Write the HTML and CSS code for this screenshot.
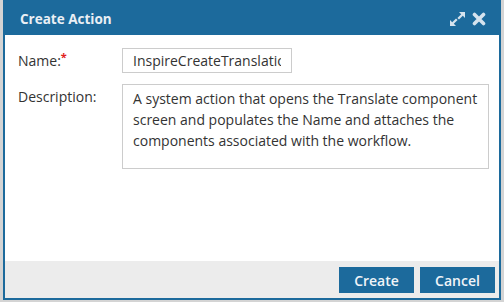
FILE: index.html
```html
<!DOCTYPE html>
<html lang="en">
<head>
    <meta charset="UTF-8">
    <title>Create Action</title>
    <link rel="stylesheet" href="styles.css">
</head>
<body>
    <div class="dialog">
        <div class="dialog-header">
            <span class="dialog-title">Create Action</span>
            <div class="dialog-tools">
                <!-- expand -->
                <svg class="tool-icon" width="17" height="16" viewBox="0 0 17 16">
                    <path d="M10 1 H16 V7 L13.8 4.8 L10 8.6 L8.4 7 L12.2 3.2 Z" fill="#d5e3ee"/>
                    <path d="M1 9 V15 H7 L4.8 12.8 L8.6 9 L7 7.4 L3.2 11.2 Z" fill="#d5e3ee"/>
                </svg>
                <!-- close -->
                <svg class="tool-icon" width="14" height="14" viewBox="0 0 14 14">
                    <path d="M2.5 2.5 L11.5 11.5 M11.5 2.5 L2.5 11.5" stroke="#d5e3ee" stroke-width="3.6" stroke-linecap="round"/>
                </svg>
            </div>
        </div>

        <div class="dialog-body">
            <div class="form-row">
                <label class="form-label">Name:<span class="required">*</span></label>
                <input class="form-input" type="text" value="InspireCreateTranslationAction">
            </div>
            <div class="form-row">
                <label class="form-label">Description:</label>
                <textarea class="form-textarea">A system action that opens the Translate component screen and populates the Name and attaches the components associated with the workflow.</textarea>
            </div>
        </div>

        <div class="dialog-footer">
            <button class="btn">Create</button>
            <button class="btn">Cancel</button>
        </div>
    </div>
</body>
</html>
```

FILE: styles.css
```css
body {
    margin: 0;
    padding: 0 3px 0 3px;
    background: #d4d4d4;
    font-family: "Open Sans", Arial, sans-serif;
    color: #333;
}
.dialog {
    width: 494px;
    height: 296px;
    border: 2px solid #1c6a9c;
    background: #fff;
    display: flex;
    flex-direction: column;
}
.dialog-header {
    height: 33px;
    flex: none;
    background: #1c6a9c;
    display: flex;
    align-items: center;
    justify-content: space-between;
    padding: 0 13px 0 15px;
}
.dialog-title {
    color: #e9eff5;
    font-weight: bold;
    font-size: 13.5px;
}
.dialog-tools {
    display: flex;
    align-items: center;
    gap: 6px;
}
.tool-icon {
    display: block;
}
.dialog-body {
    flex: 1;
    padding: 13px 10px 0 13px;
}
.form-row {
    display: flex;
    align-items: flex-start;
    margin-bottom: 11px;
}
.form-label {
    width: 104px;
    font-size: 14px;
    line-height: 25px;
    color: #333;
}
.required {
    color: #e02020;
    font-size: 11px;
    font-weight: bold;
    vertical-align: 5px;
    line-height: 12px;
}
.form-input, .form-textarea {
    font-family: "Open Sans", Arial, sans-serif;
    font-size: 14px;
    color: #333;
    border: 1px solid #cccccc;
    border-radius: 0;
    box-sizing: border-box;
    margin: 0;
    outline: none;
}
.form-input {
    width: 170px;
    height: 25px;
    padding: 0 10px;
}
.form-textarea {
    width: 367px;
    height: 85px;
    padding: 3px 10px;
    line-height: 21px;
    resize: none;
    overflow: hidden;
}
.dialog-footer {
    height: 37px;
    flex: none;
    background: #ececec;
    display: flex;
    justify-content: flex-end;
    align-items: flex-start;
    gap: 6px;
    padding: 6px 4px 0 0;
    box-sizing: border-box;
}
.btn {
    width: 75px;
    height: 26px;
    background: #1c6a9c;
    color: #f0f4f8;
    border: none;
    font-family: "Open Sans", Arial, sans-serif;
    font-weight: 600;
    font-size: 14px;
    padding: 0;
    cursor: pointer;
}
```
